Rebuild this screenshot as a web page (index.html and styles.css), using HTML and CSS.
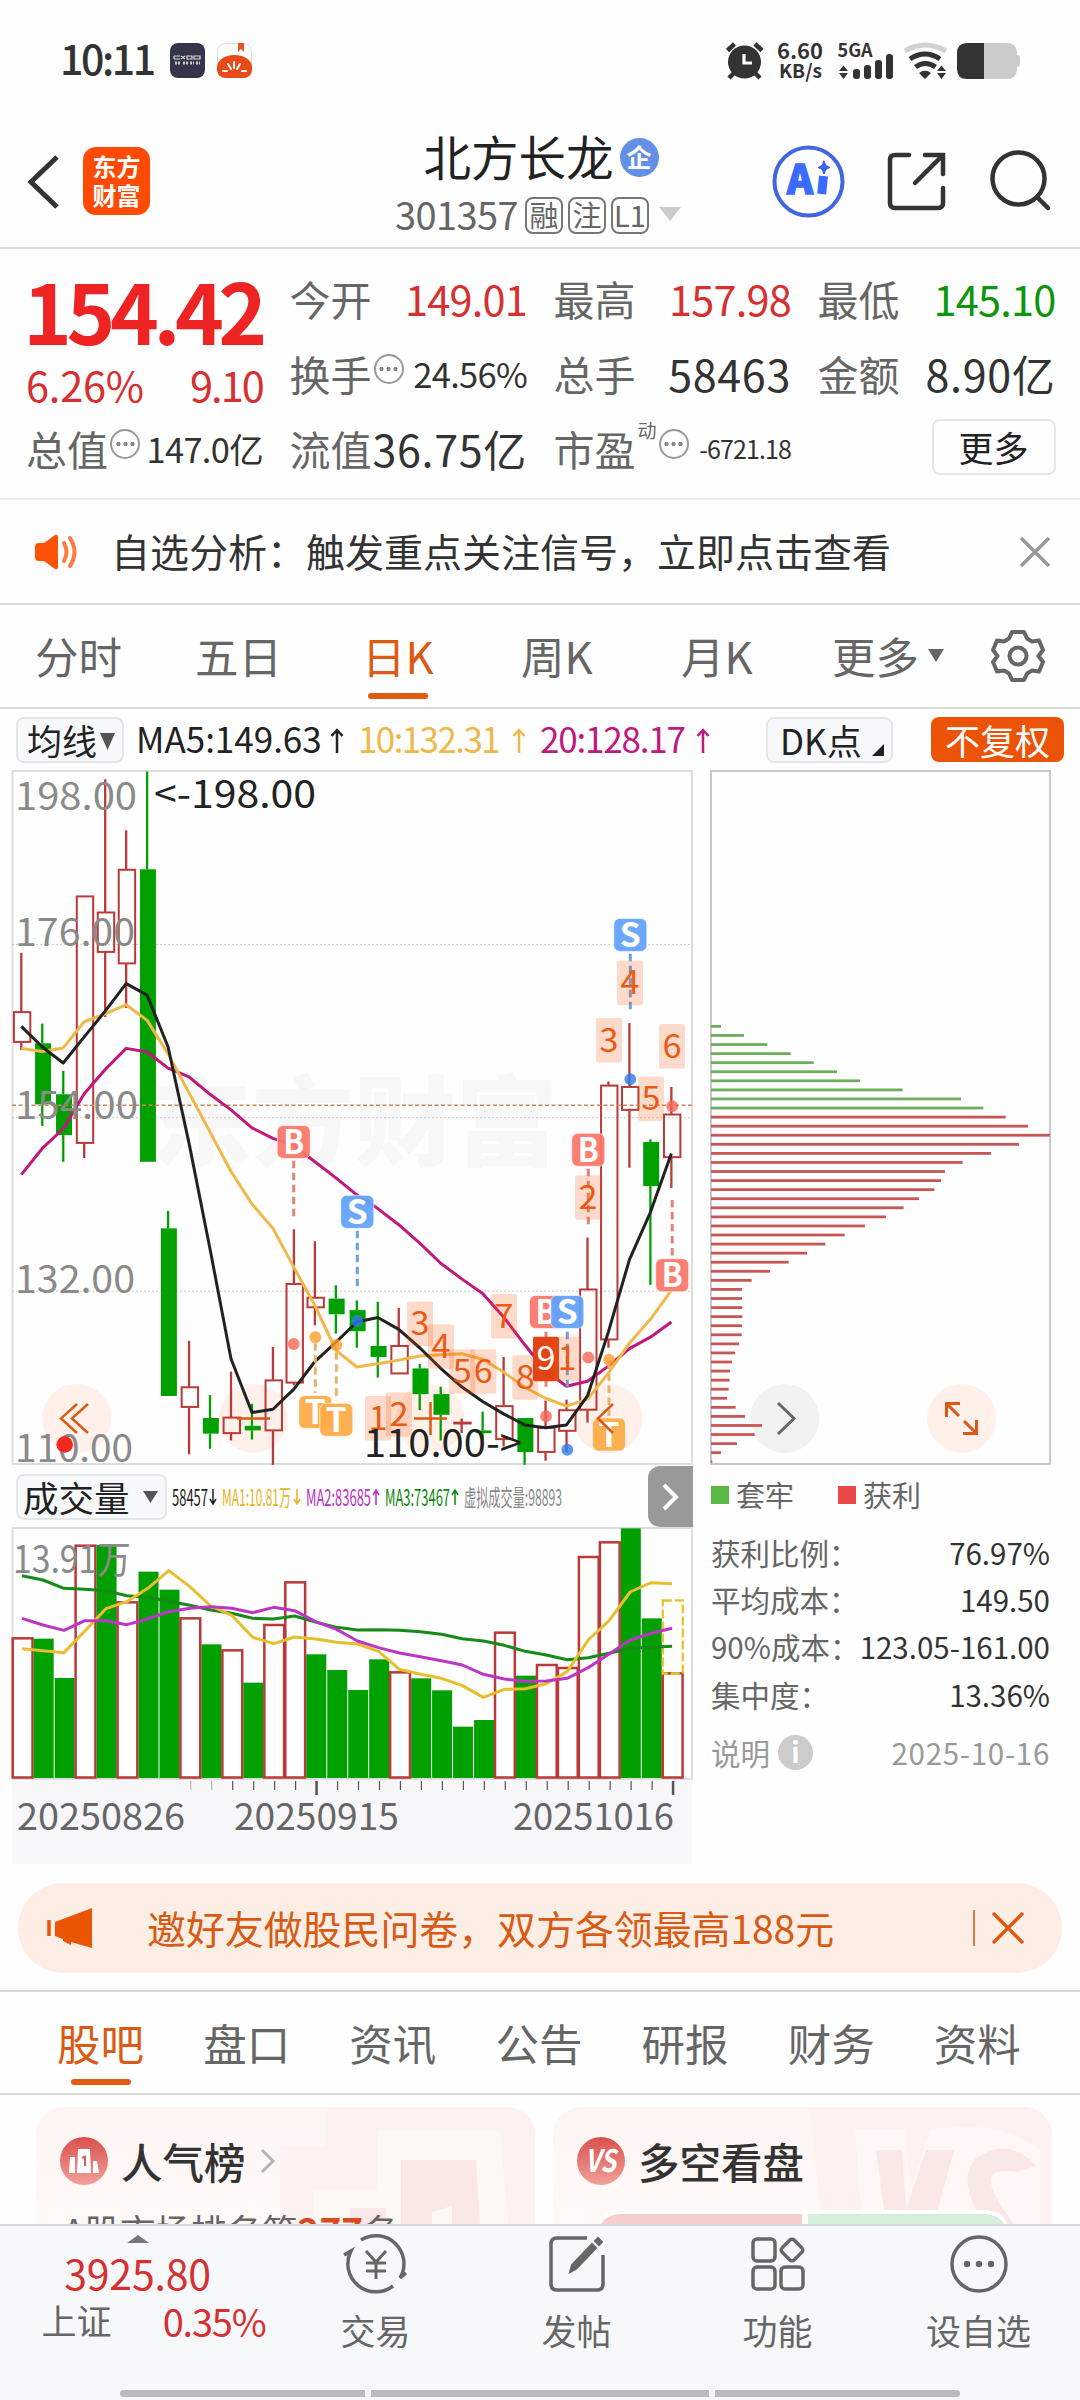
FILE: index.html
```html
<!DOCTYPE html>
<html lang="zh-CN">
<head>
<meta charset="utf-8">
<title>北方长龙 301357</title>
<link rel="stylesheet" href="styles.css">
</head>
<body>
<div class="status">
  <span class="clock">10:11</span>
  <svg class="app-a" width="35" height="35" viewBox="0 0 35 35"><rect width="35" height="35" rx="8" fill="#34344a"/><path d="M4 13h6M4 16h6M4 13v3M11 13l4 3M11 16l4-3M17 13h5v3h-5zM24 13h6v3h-6z" stroke="#ddd" stroke-width="1.2" fill="none"/><path d="M5 20h6M13 20h5M20 20h4M26 20h4" stroke="#ccc" stroke-width="3" stroke-dasharray="2 1"/></svg>
  <svg class="app-b" width="35" height="35" viewBox="0 0 35 35"><rect x=".5" y=".5" width="34" height="34" rx="8" fill="#fff" stroke="#ddd"/><path d="M21 0h6v9l-3-3-3 3z" fill="#e8572a"/><path d="M0 24C1 8 34 8 35 24v3q-1 8-9 8H9q-8 0-9-8z" fill="#e84a18"/><path d="M17 19v6M11 21l3 5M23 21l-3 5M6 28h4M25 28h4" stroke="#fff" stroke-width="2" stroke-linecap="round"/></svg>
  <svg class="sys" width="300" height="44" viewBox="720 38 300 44">
    <g fill="#333"><circle cx="744.5" cy="62" r="16.5"/><path d="M744 54v9h8" fill="none" stroke="#fff" stroke-width="3.2"/><path d="M727.500 50.500l7-6.500M762 50.500l-7-6.500M734 73l-5 5M755 73l5 5" stroke="#333" stroke-width="4.500"/>
    <path d="M839 71l4.500-5.500L848 71zM839 73l4.500 6L848 73zM937 71l4.500-5.500L946 71zM937 73l4.500 6L946 73zM919 73q6-4.500 12 0l-6 6z"/>
    <rect x="853" y="69" width="7" height="10" rx="3"/><rect x="864" y="65" width="7" height="14" rx="3"/><rect x="875" y="60" width="7" height="19" rx="3"/><rect x="886" y="54" width="7" height="25" rx="3"/></g>
    <text x="777" y="58.500" textLength="46" lengthAdjust="spacingAndGlyphs" font-size="21">6.60</text>
    <text x="779" y="78" textLength="43" lengthAdjust="spacingAndGlyphs" font-size="19">KB/s</text>
    <text x="837.500" y="56.500" textLength="35" lengthAdjust="spacingAndGlyphs" font-size="18">5GA</text>
    <g fill="none" stroke-width="5"><path d="M905 51q20-12 41 0" stroke="#d2d2d2"/><path d="M910 59q15-10 30 0M915.500 67q10-7 20 0" stroke="#333"/></g>
    <path d="M984 43h23q9 0 10 9v3q3 0 3 3v6q0 3-3 3v3q-1 9-10 9h-23z" fill="#cbcbcb"/><path d="M984 43h-17q-10 0-10 10v16q0 10 10 10h17z" fill="#333"/>
  </svg>
</div>

<header class="head">
  <svg class="back" width="34" height="60" viewBox="26 152 34 60"><path d="M57 157L31 182l26 25" fill="none" stroke="#333" stroke-width="5"/></svg>
  <div class="logo"><span>东方</span><span>财富</span></div>
  <div class="title">
    <div class="name"><b>北方长龙</b><i>企</i></div>
    <div class="code"><span>301357</span><em>融</em><em>注</em><em>L1</em><svg width="24" height="16"><path d="M1 1h22l-11 14z" fill="#ccc"/></svg></div>
  </div>
  <svg class="tools" width="300" height="80" viewBox="770 140 300 80" fill="none" stroke="#333" stroke-width="4.500" stroke-linecap="round">
    <circle cx="808.500" cy="181.500" r="34" stroke="#4166e0" stroke-width="4"/>
    <text class="ai" x="787" y="194" textLength="26" lengthAdjust="spacingAndGlyphs">A</text>
    <path d="M823.500 176l-1.800 18" stroke="#3c6cff" stroke-width="9" stroke-linecap="butt"/><path d="M824 161l2 4.500 4 2-4 2-2 4.500-2-4.500-4-2 4-2z" fill="#3c63e8" stroke="#3c63e8" stroke-width="1"/>
    <path d="M909 155h-14q-5 0-5 5v43q0 5 5 5h43q5 0 5-5v-15M925 155h18v19M942 156l-27 27"/>
    <circle cx="1018.500" cy="178.500" r="26"/><path d="M1037 197l11 11"/>
  </svg>
</header>

<section class="quote">
  <div class="price"><strong>154.42</strong><div><span>6.26%</span><span class="chg">9.10</span></div></div>
  <div class="cell"><label>今开</label><span class="up">149.01</span></div>
  <div class="cell"><label>最高</label><span class="up">157.98</span></div>
  <div class="cell"><label>最低</label><span class="down">145.10</span></div>
  <div class="cell"><label>换手<u></u></label><span class="mid">24.56%</span></div>
  <div class="cell"><label>总手</label><span class="wide">58463</span></div>
  <div class="cell"><label>金额</label><span class="wide">8.90亿</span></div>
  <div class="cell"><label>总值<u></u></label><span class="mid">147.0亿</span></div>
  <div class="cell"><label>流值</label><span class="wide">36.75亿</span></div>
  <div class="cell"><label>市盈<sup>动</sup><u></u></label><span class="small">-6721.18</span></div>
  <div class="cell end"><button>更多</button></div>
</section>

<section class="notice">
  <svg width="46" height="38" viewBox="33 531 46 38"><path d="M35 545q0-4 4-4h5l11-8q3-1 3 2v30q0 3-3 2l-11-8h-5q-4 0-4-4z" fill="#ff5206"/><path d="M64 541q5 9 0 18M70 536q9 14 0 28" fill="none" stroke="#ff7a3c" stroke-width="4" stroke-linecap="round"/></svg>
  <p>自选分析：触发重点关注信号，立即点击查看</p>
  <svg width="32" height="32" viewBox="0 0 32 32"><path d="M2 2l28 28M30 2L2 30" stroke="#999" stroke-width="3.500"/></svg>
</section>

<nav class="ktabs">
  <a>分时</a><a>五日</a><a class="on">日K</a><a>周K</a><a>月K</a><a>更多<svg width="16" height="13"><path d="M0 0h16l-8 13z" fill="#666"/></svg></a>
  <svg width="56" height="56" viewBox="-28 -28 56 56" fill="none" stroke="#666" stroke-width="4" stroke-linejoin="round"><circle r="8.500"/><path d="M-6-24H6L9-17.500 14-14.500 21-15.500 25-6 20.500 0 25 6 21 15.500 14 14.500 9 17.500 6 24H-6L-9 17.500-14 14.500-21 15.500-25 6-20.500 0-25-6-21-15.500-14-14.500-9-17.500z"/></svg>
</nav>

<section class="indicator">
  <button class="chip ma">均线<svg width="15" height="17"><path d="M0 0h15l-7.500 17z" fill="#555"/></svg></button>
  <span class="m5">MA5:149.63<svg width="14" height="25"><path d="M7 25V2M1.500 8L7 2l5.500 6"/></svg></span>
  <span class="m10">10:132.31<svg width="14" height="25"><path d="M7 25V2M1.500 8L7 2l5.500 6"/></svg></span>
  <span class="m20">20:128.17<svg width="14" height="25"><path d="M7 25V2M1.500 8L7 2l5.500 6"/></svg></span>
  <button class="chip dk">DK点<svg width="12" height="12"><path d="M12 0v12H0z" fill="#222"/></svg></button>
  <button class="fq">不复权</button>
</section>

<main class="charts">
  <div class="left">
    <svg id="price" width="700" height="696" viewBox="0 770 700 696"></svg>
    <div class="vhead">
      <button class="chip vol">成交量<svg width="15" height="12"><path d="M0 0h15l-7.500 12z" fill="#555"/></svg></button>
      <svg width="400" height="30" viewBox="170 1482 400 30" font-size="23">
        <text x="172" y="1506" textLength="36" lengthAdjust="spacingAndGlyphs" fill="#222">58457</text>
        <text x="222" y="1506" textLength="69" lengthAdjust="spacingAndGlyphs" fill="#e6b422">MA1:10.81万</text>
        <text x="306" y="1506" textLength="65" lengthAdjust="spacingAndGlyphs" fill="#b82fc2">MA2:83685</text>
        <text x="385" y="1506" textLength="65" lengthAdjust="spacingAndGlyphs" fill="#0a8a0a">MA3:73467</text>
        <text x="464" y="1506" textLength="98" lengthAdjust="spacingAndGlyphs" fill="#888">虚拟成交量:98893</text>
        <g fill="none" stroke-width="1.500"><path d="M213 1489v15m-3-5l3 5 3-5" stroke="#222"/><path d="M297 1489v15m-3-5l3 5 3-5" stroke="#e6b422"/><path d="M376 1505v-15m-3 5l3-5 3 5" stroke="#b82fc2"/><path d="M455 1505v-15m-3 5l3-5 3 5" stroke="#0a8a0a"/></g>
      </svg>
      <button class="next"><svg width="20" height="30"><path d="M4 3l12 12L4 27" fill="none" stroke="#fff" stroke-width="4"/></svg></button>
    </div>
    <svg id="volume" width="700" height="337" viewBox="0 1527 700 337"></svg>
  </div>
  <div class="right">
    <svg id="chips" width="380" height="696" viewBox="700 770 380 696"></svg>
    <div class="legend"><span><i class="g"></i>套牢</span><span><i class="r"></i>获利</span></div>
    <dl>
      <div><dt>获利比例：</dt><dd>76.97%</dd></div>
      <div><dt>平均成本：</dt><dd>149.50</dd></div>
      <div><dt>90%成本：</dt><dd>123.05-161.00</dd></div>
      <div><dt>集中度：</dt><dd>13.36%</dd></div>
      <div class="note"><dt>说明<i>i</i></dt><dd>2025-10-16</dd></div>
    </dl>
  </div>
</main>

<aside class="promo">
  <svg width="46" height="40" viewBox="0 0 46 40"><path d="M2 12v16" stroke="#ea5504" stroke-width="3.500"/><path d="M8 14L45 0v40l-21-6v3l-8-4v-2l-8-3z" fill="#ea5504"/></svg>
  <p>邀好友做股民问卷，双方各领最高188元</p>
  <b></b>
  <svg width="32" height="32" viewBox="0 0 32 32"><path d="M1 1l30 30M31 1L1 31" stroke="#dc5a14" stroke-width="3.500"/></svg>
</aside>

<nav class="tabs"><a class="on">股吧</a><a>盘口</a><a>资讯</a><a>公告</a><a>研报</a><a>财务</a><a>资料</a></nav>

<section class="cards">
  <article>
    <svg class="deco" width="499" height="117" viewBox="36 2107 499 117"><path d="M327 2107h208v117H280v-78h45z" fill="#fdf2f0"/><path d="M377 2131h123l8 93H313v-35h64z" fill="#fef8f5"/><path d="M401 2160h75l4 64h-79z" fill="#fae8e6"/><path d="M350 2208h36v16h-36z" fill="#fae9e7"/><path d="M432 2212l20-6v18h-20z" fill="#fef8f5"/></svg>
    <h3><svg width="48" height="48" viewBox="0 0 48 48"><defs><linearGradient id="rg" x1="0" y1="0" x2="0" y2="1"><stop offset="0" stop-color="#d8504c"/><stop offset="1" stop-color="#f3a09a"/></linearGradient></defs><circle cx="24" cy="24" r="24" fill="url(#rg)"/><path d="M9 36l1-16h5v16zM18 12h12l1 24H17zM33 24h4l2 12h-6z" fill="#fff"/><path d="M22 21l3-1.500V29" fill="none" stroke="#d8605a" stroke-width="2"/></svg>人气榜<svg class="chev" width="14" height="24"><path d="M1 1l11 11L1 23" fill="none" stroke="#b5b5b5" stroke-width="3"/></svg></h3>
    <p>A股市场排名第<b>277</b>名</p>
  </article>
  <article>
    <svg class="deco" width="499" height="117" viewBox="553 2107 499 117"><path d="M809 2107h243v117H822z" fill="#fdf2f0"/><path d="M855 2130h50l5 60 20-60q70-12 110 20v74H862z" fill="#fef7f5"/><path d="M876 2150h26l4 60 20-60h28l-20 74H886zM1036 2166q-26-30-60-8-20 22 8 66h30q-46-60 0-52z" fill="#fae8e6"/><rect x="598" y="2210" width="410" height="40" rx="22" fill="#fff"/><path d="M802 2214v10H601q6-10 20-10z" fill="#f5cfcd"/><path d="M808 2214v10h196q-6-10-20-10z" fill="#d5efdb"/></svg>
    <h3><svg width="48" height="48" viewBox="0 0 48 48"><circle cx="24" cy="24" r="24" fill="url(#rg)"/><text x="8" y="35" font-size="31" font-weight="700" font-style="italic" fill="#fff" textLength="31" lengthAdjust="spacingAndGlyphs">VS</text></svg>多空看盘</h3>
  </article>
</section>

<footer>
  <div class="index"><svg width="22" height="8"><path d="M0 8L11 0l11 8z" fill="#777"/></svg><strong>3925.80</strong><div><span>上证</span><em>0.35%</em></div></div>
  <a><svg width="66" height="60" viewBox="-33 -30 66 60" fill="none" stroke="#666" stroke-width="3.500"><path d="M-15-24A28 28 0 0 1 24 14L30 9M17 22A28 28 0 0 1-25-13L-32-9"/><path d="M-10-13L0-2 10-13M0-2v17M-10-1h20M-10 7h20" stroke-width="3"/></svg>交易</a>
  <a><svg width="66" height="60" viewBox="-33 -30 66 60" fill="none" stroke="#666" stroke-width="3.500"><path d="M10-26h-30q-6 0-6 6v40q0 6 6 6h40q6 0 6-6v-29"/><path d="M-7 8l2-7 20-21 4 4-20 21zM18-23l3-3 4 4-3 3z" fill="#666" stroke-width="2"/></svg>发帖</a>
  <a><svg width="66" height="60" viewBox="-33 -30 66 60" fill="none" stroke="#666" stroke-width="3.500"><rect x="-25" y="-25" width="22" height="22" rx="4"/><rect x="-25" y="3" width="22" height="22" rx="4"/><rect x="3" y="3" width="22" height="22" rx="4"/><rect x="5.500" y="-22.500" width="17" height="17" rx="3" transform="rotate(45 14 -14)"/></svg>功能</a>
  <a><svg width="66" height="60" viewBox="-33 -30 66 60" fill="none" stroke="#666" stroke-width="3.500"><circle r="27"/><g fill="#666" stroke="none"><circle cx="-12" r="3.200"/><circle r="3.200"/><circle cx="12" r="3.200"/></g></svg>设自选</a>
  <div class="pill"><i></i><i></i><i></i></div>
</footer>
<script src="charts.js"></script>
</body>
</html>
```
FILE: styles.css
```css
*{box-sizing:border-box}
body{margin:0;width:1080px;height:2400px;overflow:hidden;background:#fefefe;color:#333;font-family:"Noto Sans CJK SC",sans-serif;display:flex;flex-direction:column}
body>*{flex:none}
svg{display:block;flex:none;overflow:visible}
svg text{font-family:"Noto Sans CJK SC",sans-serif}
button{font:inherit;color:inherit;padding:0;border:0;background:none;flex:none}
i,em{font-style:normal}
p,h3,dl,dd{margin:0}

.status{height:120px;display:flex;align-items:center}
.clock{width:108px;margin-left:60px;font-size:41px;font-weight:500;letter-spacing:-2.400px;line-height:60px;margin-top:-6px}
.app-a{margin-left:2px}
.app-b{margin-left:12px}
.sys{margin-left:468px}
.sys text{font-weight:700;fill:#333}

.head{height:129px;border-bottom:2px solid #d8d8d8;display:flex;position:relative;padding-left:26px}
.back{margin-top:32px}
.logo{width:67px;height:68px;margin:27px 0 0 23px;border-radius:13px;background:#ff4a04;color:#fff;font-weight:700;font-size:24px;line-height:29px;display:flex;flex-direction:column;align-items:center;padding-top:4px}
.title{width:322px;margin:3px 0 0 230px}
.name{display:flex;align-items:center;justify-content:center;height:66px}
.name b{font-weight:400;font-size:47.500px;line-height:66px;color:#222}
.name i{width:39px;height:39px;border-radius:50%;background:#6390e6;color:#fff;font-size:25px;font-weight:700;line-height:36px;text-align:center;margin:2px 0 0 6px}
.code{display:flex;align-items:center;height:50px;color:#666;font-size:38px;margin-left:15px}
.code span{letter-spacing:-.600px;width:130px;line-height:50px}
.code em{width:38px;height:37px;border:2px solid #777;border-radius:8px;font-size:29px;line-height:31px;text-align:center;margin-right:4px;margin-top:2px}
.code em:nth-of-type(n+2){margin-left:1px}
.code svg{margin-left:5px}
.tools{margin:20px 0 0 68px}
.ai{font-size:40px;font-weight:900;fill:#3c6cff;stroke:#3c6cff;stroke-width:1.500px}

.quote{height:251px;padding:11.500px 0 0 26px;display:grid;grid-template-columns:237px 237.500px 237.500px 238px;column-gap:26.500px;grid-template-rows:75px 75px 75px;border-bottom:2px solid #eee;font-size:41.500px}
.price{grid-row:1/3;color:#d63031;display:flex;flex-direction:column}
.price strong{font-size:83px;line-height:96px;height:97px;letter-spacing:-5.500px;color:#ee2424;margin-left:-3px}
.price div{display:flex;justify-content:space-between;line-height:54px;letter-spacing:-.200px}
.price .chg{letter-spacing:-1.900px}
.cell{display:flex;align-items:center;justify-content:space-between;white-space:nowrap;line-height:70px}
.cell label{color:#666;font-size:41px;display:flex;align-items:center}
.cell span{letter-spacing:-.800px;color:#333}
.cell .up{color:#d63031}
.cell .down{color:#0b960b}
.cell .wide{font-size:43px;letter-spacing:.700px}
.cell .mid{font-size:34.500px;letter-spacing:-.700px}
.cell .small{font-size:25px;letter-spacing:-.900px}
.cell sup{font-size:19px;line-height:20px;align-self:flex-start;margin:7px 0 0 2px}
.cell u{width:30px;height:30px;border:2px solid #999;border-radius:50%;margin:-9px 0 0 2px;background:radial-gradient(circle,#888 1.800px,transparent 2.300px) 50% 50%/7px 26px;background-clip:content-box;padding:0 2.500px;background-repeat:repeat-x}
.end{justify-content:flex-end}
.end button{width:124px;height:56px;border:2px solid #e6e6e6;border-radius:8px;font-size:35px;line-height:48px;color:#222;margin-top:-2px}

.notice{height:105px;border-bottom:2px solid #d8d8d8;display:flex;align-items:center;padding-left:33px}
.notice p{width:940px;padding-left:32px;font-size:39px;line-height:60px;margin-top:-4px}

.ktabs{height:104px;border-bottom:2px solid #d8d8d8;display:flex;align-items:center;padding-left:35px;font-size:43.500px;color:#666}
.ktabs a{width:160px;height:100px;line-height:98px;display:flex;align-items:center}
.ktabs a.on{width:159px;margin-left:7px;color:#dc5a14;position:relative}
.on::after{content:"";position:absolute;width:60px;height:6px;border-radius:3px;background:#e05a10}
.ktabs .on::after{left:6px;bottom:7px}
.ktabs a:nth-child(4){width:160px}
.ktabs a:nth-child(5){width:151px}
.ktabs a svg{margin:0 0 2px 9px}
.ktabs>svg{margin-left:-2px}

.indicator{height:61px;display:flex;align-items:center;padding:0 0 0 16px;font-size:35px;white-space:nowrap;line-height:50px}
.indicator>span{display:flex;align-items:center;margin-top:-4px}
.indicator>span svg{margin:6px 0 0 auto;fill:none;stroke:currentColor;stroke-width:2.500}
.chip{height:46px;border:2px solid #e4e6ea;border-radius:8px;background:#f7f8fa;color:#222;display:flex;align-items:center}
.ma{width:108px;padding-left:9px;font-size:35px}
.ma svg{margin:3px 0 0 3px}
.m5{width:208px;margin-left:12px;color:#222;letter-spacing:0}
.m10{width:168px;margin-left:14px;color:#efb84a;letter-spacing:-1.600px}
.m20{width:170px;margin-left:14px;color:#c0187c;letter-spacing:-1.200px}
.dk{width:127px;margin-left:56px;padding-left:12px}
.dk svg{margin:20px 0 0 10px}
.fq{width:133px;height:45px;margin-left:38px;border-radius:8px;background:#eb5408;color:#fff;line-height:41px;font-size:35px}

.charts{display:flex;height:1094px}
.left{width:700px}
.right{width:380px}
.vhead{height:61px;display:flex;align-items:center}
.vol{width:151px;margin-left:16px;padding-left:5px;font-size:35.500px}
.vol svg{margin-left:13px}
.vhead>svg{margin-left:3px}
.next{width:45px;height:61px;margin-left:78px;border-radius:12px 0 0 12px;background:#999;padding-left:12px}
.legend{display:flex;height:56px;align-items:center;color:#666;font-size:29px}
.legend span{display:flex;align-items:center;width:127px}
.legend span:first-child{margin-left:11px}
.legend i{width:18px;height:18px;margin:2px 7px 0 0}
.g{background:#5ab946}
.r{background:#e84848}
dl{width:339px;margin-left:11px;padding-top:6px;font-size:29.500px}
dl div{display:flex;justify-content:space-between;align-items:center;height:47.300px;line-height:46px;white-space:nowrap}
dt{color:#666;display:flex;align-items:center}
dd{letter-spacing:0}
.note dt,.note dd{color:#999}
.note dd{letter-spacing:.700px}
dl .note{height:70px}
.note i{width:35px;height:35px;margin-left:8px;border-radius:50%;background:#ccc;color:#fff;line-height:32px;text-align:center;font-size:28px;font-weight:700}

.promo{margin:19px 18px 0;height:90px;border-radius:45px;background:#fceee4;display:flex;align-items:center;padding-left:29px;color:#d85a14}
.promo p{width:880px;padding-left:54px;font-size:39px;line-height:60px;margin-top:-3px;letter-spacing:-.100px}
.promo b{width:2px;height:36px;background:#dc7a44;margin-right:17px}

.tabs{height:105px;margin-top:17px;border:solid #d8d8d8;border-width:2px 0;display:flex;padding-left:57px;font-size:43.500px;line-height:102px;color:#666}
.tabs a{width:146.400px;position:relative}
.tabs .on{color:#dc5a14}
.tabs .on::after{left:14px;bottom:8px}

.cards{height:129px;padding:12px 28px 0 36px;display:flex;gap:18px;overflow:hidden}
.cards article{flex:1;height:140px;border-radius:28px 28px 0 0;background:linear-gradient(#fef5f3,#fffaf8);position:relative;overflow:hidden;padding-left:24px}
.deco{position:absolute;left:0;top:0}
.cards h3{position:relative;display:flex;align-items:center;gap:13px;font-size:41.500px;font-weight:500;color:#333;line-height:60px;height:60px;margin-top:24px}
.chev{margin-left:2px}
.cards p{position:relative;font-size:35.500px;line-height:50px;margin:13px 0 0 3px;color:#666;white-space:nowrap}
.cards p b{color:#d94a1e;font-size:37px}

footer{height:176px;position:relative;background:#f7f8fa;border-top:2px solid #d6d8de;display:flex}
.index{width:275px;display:flex;flex-direction:column;align-items:center;padding-top:9px}
.index strong{font-weight:400;color:#d63031;font-size:41px;line-height:60px;letter-spacing:-.200px;margin-top:-1px}
.index div{display:flex;width:224px;justify-content:space-between;font-size:35px;line-height:50px;margin:-7px 0 0 32px;color:#666}
.index em{color:#d63031;font-size:38px;letter-spacing:-1.200px;margin-top:1px}
footer a{width:201px;display:flex;flex-direction:column;align-items:center;color:#666;font-size:35px;line-height:50px;padding-top:8px}
footer a svg{margin-bottom:11px}
.pill{position:absolute;left:120px;top:164px;display:flex;gap:6px}
.pill i{width:245px;height:7px;background:#b9babc;border-radius:4px 0 0 4px}
.pill i:nth-child(2){width:338px;border-radius:0}
.pill i:nth-child(3){border-radius:0 4px 4px 0}
```
FILE: charts.js
```javascript
const STEP = 20.97;
const RED = '#b93a38', GREEN = '#00a000';
const py = v => 760 + v / 2.1778;
const cx = i => 21.3 + STEP * i;
const rect = (x, y, w, h, a) => `<rect x="${x}" y="${y}" width="${w}" height="${h}" ${a}/>`;
const line = (x1, y1, x2, y2, a) => `<path d="M${x1} ${y1}L${x2} ${y2}" ${a}/>`;
const poly = (ys, f, c, x = cx) => `<polyline fill="none" stroke="${c}" stroke-width="3" stroke-linejoin="round" points="${ys.map((v, i) => x(i) + ',' + f(v)).join(' ')}"/>`;
const text = (x, y, w, s, t, c, more = '') => `<text x="${x}" y="${y}" textLength="${w}" lengthAdjust="spacingAndGlyphs" font-size="${s}" fill="${c}" ${more}>${t}</text>`;

/* candle: colour, high, body top, body bottom, low */
const candles = [
  ['R',420,548,615,632],['G',574,617,750,797],['G',677,728,817,875],['R',296,296,835,867],
  ['R',42,331,419,560],['R',153,238,444,540],['G',25,238,875,875],['G',982,1020,1385,1385],
  ['R',1265,1365,1410,1512],['G',1383,1433,1467,1500],['R',1332,1431,1467,1482],['G',1402,1450,1460,1480],
  ['R',1278,1350,1461,1535],['R',1022,1140,1357,1362],['R',1048,1170,1193,1231],['G',1144,1173,1207,1249],
  ['G',1177,1198,1244,1280],['G',1180,1276,1300,1345],['R',1193,1275,1337,1337],['G',1315,1325,1381,1416],
  ['G',1365,1381,1426,1482],['R',1434,1442,1446,1466],['G',1419,1460,1466,1480],['R',1300,1406,1480,1495],
  ['G',1433,1433,1507,1535],['R',1395,1453,1508,1526],['R',1393,1415,1462,1508],['R',1040,1152,1416,1443],
  ['R',700,708,1263,1280],['R',573,711,763,888],['G',826,832,928,1143],['R',712,771,866,932]
];
const ma5 = [580,625,660,603,547,487,512,625,835,1065,1304,1421,1414,1370,1310,1268,1224,1214,1240,1280,1325,1365,1397,1424,1448,1454,1448,1385,1245,1088,985,857];
const ma10 = [628,635,627,570,553,533,567,640,725,810,896,967,1020,1105,1188,1285,1322,1315,1307,1298,1295,1293,1305,1333,1366,1390,1407,1392,1335,1270,1218,1155];
const ma20 = [903,846,803,727,674,628,636,671,690,728,762,801,824,840,875,910,947,977,1012,1052,1096,1130,1162,1213,1273,1330,1364,1353,1320,1282,1257,1224];

let s = text(150, 1158, 408, 98, '东方财富', '#f7f7f7', 'font-weight="900"');
s += rect(12.5, 771, 679.5, 693, 'fill="none" stroke="#ddd" stroke-width="2"');
[944.6, 1117.7, 1291.2].forEach(y => s += line(12, y, 692, y, 'stroke="#ccc" stroke-dasharray="2 2"'));
[76.7, 253.5, 430, 608].forEach(x => s += `<circle cx="${x}" cy="1418.400" r="34.500" fill="#fff0ea"/>`);
candles.forEach(([k, h, a, b, l], i) => {
  const x = cx(i), c = k === 'R' ? RED : GREEN, w = 'stroke-width="2.300" stroke="' + c + '"';
  s += line(x, py(h), x, py(a), w) + line(x, py(b), x, py(l), w);
  s += k === 'R' ? rect(x - 7.4, py(a) + .5, 16.4, py(b) - py(a) - 1 > 0 ? py(b) - py(a) - 1 : 1, 'fill="none" stroke="' + RED + '" stroke-width="2"')
                 : rect(x - 7.2, py(a), 16, py(b) - py(a), `fill="${GREEN}"`);
});
s += line(12, 1105.3, 692, 1105.3, 'stroke="#c98a5c" stroke-width="1.600" stroke-dasharray="4 2.500"');
s += poly(ma20, py, '#c0187c') + poly(ma10, py, '#f0b848') + poly(ma5, py, '#222');
s += line(237, 1418.4, 270, 1418.4, 'stroke="#d85a14" stroke-width="2.500"') + line(414, 1418.4, 447, 1418.4, 'stroke="#d85a14" stroke-width="2.500"') + line(430.5, 1402, 430.5, 1435, 'stroke="#d85a14" stroke-width="2.500"');

const A = '#8a8a8a';
s += text(15, 810, 122, 38, '198.00', A) + text(15, 946, 120, 38, '176.00', A) + text(15, 1119, 123, 38, '154.00', A) + text(15, 1293, 120, 38, '132.00', A) + text(15, 1462, 118, 38, '110.00', A);
s += '<circle cx="64.700" cy="1444.500" r="8.300" fill="#f0281e"/>';
s += text(154, 808, 162, 38, '&lt;-198.00', '#222');

/* signal tags: letter, x, tag centre, dashes from/to, dot */
const tone = { B: ['#fb7769', '#e08478'], S: ['#62a2fb', '#6c9fdc'], T: ['#ffab47', '#e8b268'] };
[['B',293.7,832,873,1000,1272],['S',357.3,984,1025,1148,1222],['T',315.3,1420,1270,1378,1257],['T',336.3,1437,1290,1395,1274],
 ['B',546,1202,1245,1365,1429],['S',567.3,1202,1245,1365,1502],['B',588.3,849,890,1012,1301],['S',630.3,381,422,545,695],
 ['B',672.2,1122,958,1080,754],['T',609,1469,1310,1428,1306]
].forEach(([k, x, c, a, b, d]) => {
  s += line(x, py(a), x, py(b), `stroke="${tone[k][1]}" stroke-width="3" stroke-dasharray="7.500 4.500"`);
  s += `<ellipse cx="${x}" cy="${py(d)}" rx="5.900" ry="6" fill="${k === 'S' ? '#2f7bea' : k === 'B' ? '#fa6455' : '#ff9c2c'}" fill-opacity=".8"/>`;
  s += rect(x - 16.5, py(c) - 16.5, 33, 33, `rx="6" fill="${tone[k][0]}" fill-opacity=".94" stroke="#fff" stroke-opacity=".6"`);
  s += text(x - 10.5, py(c) + 12, 21, 33, k, '#fff', 'font-weight="700"');
});
[['1',378,1433],['2',399,1425],['3',420,1227],['4',441,1277],['5',462.3,1331],['6',483.3,1331],['7',504,1211],['8',525.3,1344],
 ['9',546,1304],['1',567,1304],['2',588,952],['3',609,610],['4',630,485],['5',651,737],['6',672,623]
].forEach(([t, x, c]) => {
  const hot = t === '9';
  s += rect(x - 13, py(c) - 22, 26, 44.5, `rx="2" fill="${hot ? '#e24413' : '#ff5a14'}" fill-opacity="${hot ? 1 : .22}"`);
  s += text(x - 9.5, py(c) + 11.5, 19, 33, t, hot ? '#fff' : '#ea5a14');
});
s += '<path d="M77 1404L61 1418.400 77 1433M88 1404L72 1418.400 88 1433M613 1404L598 1418.400 613 1433" fill="none" stroke="#d85a14" stroke-width="2.500"/>';
s += text(364, 1457, 158, 38, '110.00-&gt;', '#222');
document.getElementById('price').innerHTML = s;

/* volume */
const vy = v => 1460 + v / 3;
const vols = ['R535','G536','G654','R257','G255','R427','G335','G389','R475','G553','R571','G668','R495','R367','G583','G630','G690','G598','R637','G655','G691','G800','G780','R518','G647','R615','R624','R291','R247','G205','G475','R640'];
const v1 = [566,572,578,513,446,425,385,332,380,438,466,532,551,531,537,547,552,574,628,643,655,677,712,688,686,671,635,540,482,396,368,371];
const v2 = [475,495,511,482,482,494,477,455,445,440,445,458,442,452,485,508,543,563,579,590,602,615,643,657,664,663,655,623,582,540,520,505];
const v3 = [347,360,385,388,392,407,412,424,436,450,460,475,477,468,486,502,510,509,511,515,523,536,543,556,574,585,599,593,580,565,562,559];
let v = rect(12, 1781, 680, 83, 'fill="#f7f7fa"') + rect(12.5, 1528, 679.5, 251, 'fill="none" stroke="#ddd" stroke-width="2"');
const vx = i => 22 + STEP * i;
vols.forEach((t, i) => {
  const y = vy(+t.slice(1)), x = 12.7 + STEP * i;
  v += t[0] === 'G' ? rect(x, y, 20, 1778 - y, `fill="${GREEN}"`) : rect(x, y, 19.8, 1777.5 - y, `fill="none" stroke="${RED}" stroke-width="2.500"`);
});
v += rect(662.8, 1600.5, 20, 73, 'fill="none" stroke="#ecc22e" stroke-width="2.300" stroke-dasharray="9 3"');
v += poly(v3, vy, '#168a16', vx) + poly(v1, vy, '#e8be2c', vx) + poly(v2, vy, '#bc36c4', vx);
for (let i = 8; i < 32; i++) {
  const big = i === 14 || i === 31;
  v += line(vx(i) + 1, 1781, vx(i) + 1, big ? 1795 : 1790, `stroke="#555" stroke-width="${big ? 2.5 : 1.2}" opacity="${i < 10 ? .4 : 1}"`);
}
v += text(13, 1572.500, 118, 38, '13.91万', A);
v += text(17, 1830, 168, 37, '20250826', '#666') + text(234, 1830, 165, 37, '20250915', '#666') + text(513, 1830, 161, 37, '20251016', '#666');
document.getElementById('volume').innerHTML = v;

/* cost distribution */
const ends = [93,162,232,302,371,441,510,638,813,880,947,1014,1080,987,903,818,765,753,733,687,641,588,525,464,406,351,296,240,185,156,156,157,157,156,155,147,135,126,120,119,116,111,137,165,216,194,141,93,67];
let c = rect(711, 771, 339, 693, 'fill="none" stroke="#c8c8c8" stroke-width="2"');
c += '<circle cx="784.700" cy="1418.400" r="34.500" fill="#f2f2f2"/><circle cx="961.700" cy="1418.400" r="34.500" fill="#fff0ea"/>';
ends.forEach((e, i) => c += rect(711, 1025 + i * 9.07, (e - 63) / 3, 2.8, `fill="${i < 10 ? '#6cae5a' : '#c75757'}"`));
c += '<path d="M778 1403l16 15.500-16 15.500" fill="none" stroke="#666" stroke-width="3"/><path d="M960 1403.500h-13.500V1417M947 1404l12 12M964 1421l12 12M963 1433.500h13.500V1420" fill="none" stroke="#d85a14" stroke-width="3"/>';
document.getElementById('chips').innerHTML = c;
```
